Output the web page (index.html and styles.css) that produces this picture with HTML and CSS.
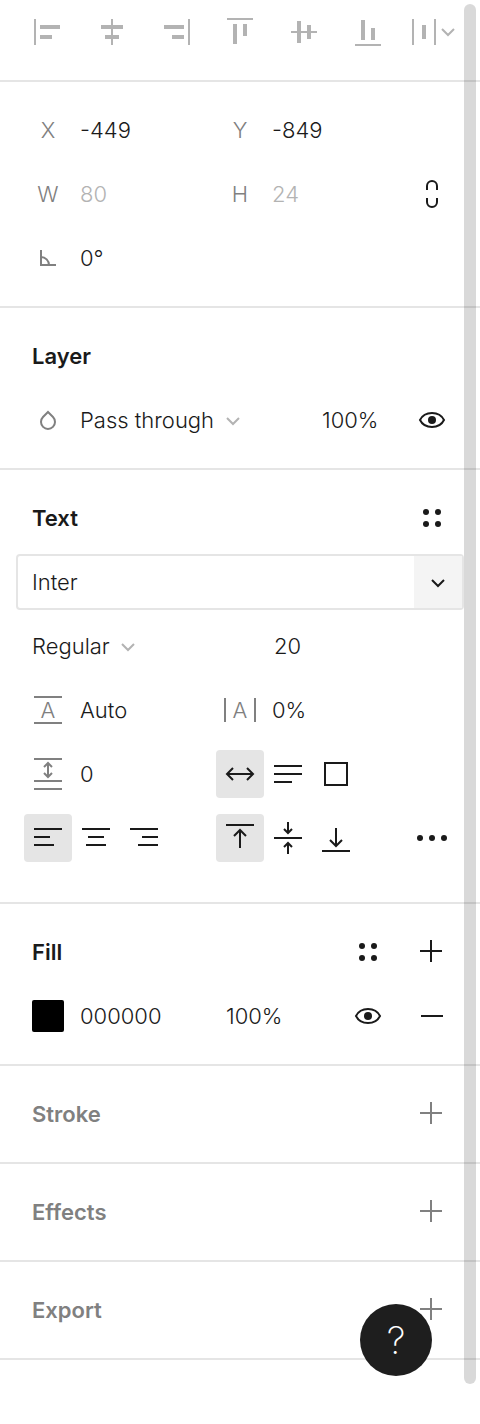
FILE: index.html
```html
<!DOCTYPE html>
<html lang="en">
<head>
    <meta charset="UTF-8">
    <meta name="viewport" content="width=device-width, initial-scale=1.0">
    <title>Design panel</title>
    <link rel="stylesheet" href="styles.css">
</head>
<body>
    <main class="panel">
        <!-- Alignment -->
        <section class="section align">
            <div class="row">
                <button class="icon-btn" aria-label="Align left">
                    <svg class="icon" viewBox="0 0 48 48"><path class="solid" d="M10 11h2v26h-2zM16 17h20v4H16zM16 27h12v4H16z"/></svg>
                </button>
                <button class="icon-btn" aria-label="Align horizontal centers">
                    <svg class="icon" viewBox="0 0 48 48"><path class="solid" d="M23 11h2v26h-2zM13 17h22v4H13zM17 27h14v4H17z"/></svg>
                </button>
                <button class="icon-btn" aria-label="Align right">
                    <svg class="icon" viewBox="0 0 48 48"><path class="solid" d="M36 11h2v26h-2zM12 17h20v4H12zM20 27h12v4H20z"/></svg>
                </button>
                <button class="icon-btn" aria-label="Align top">
                    <svg class="icon" viewBox="0 0 48 48"><path class="solid" d="M11 10h26v2H11zM17 16h4v20h-4zM27 16h4v12h-4z"/></svg>
                </button>
                <button class="icon-btn" aria-label="Align vertical centers">
                    <svg class="icon" viewBox="0 0 48 48"><path class="solid" d="M11 23h26v2H11zM17 13h4v22h-4zM27 17h4v14h-4z"/></svg>
                </button>
                <button class="icon-btn" aria-label="Align bottom">
                    <svg class="icon" viewBox="0 0 48 48"><path class="solid" d="M11 36h26v2H11zM17 12h4v20h-4zM27 20h4v12h-4z"/></svg>
                </button>
                <button class="icon-btn" aria-label="Distribute">
                    <svg class="icon" viewBox="0 0 48 48"><path class="solid" d="M4 11h2v26H4zM14 17h4v14h-4zM26 11h2v26h-2z"/><path d="M34 21l6 6 6-6"/></svg>
                </button>
            </div>
        </section>

        <!-- Position and size -->
        <section class="section">
            <div class="row">
                <label class="field"><span class="field-icon">X</span><input type="text" value="-449"></label>
                <label class="field"><span class="field-icon">Y</span><input type="text" value="-849"></label>
            </div>
            <div class="row">
                <label class="field"><span class="field-icon">W</span><input type="text" value="80" disabled></label>
                <label class="field"><span class="field-icon">H</span><input type="text" value="24" disabled></label>
                <button class="icon-btn" aria-label="Constrain proportions">
                    <svg class="icon" viewBox="0 0 48 48"><path d="M19 20v-4a5 5 0 0 1 10 0v4M19 28v4a5 5 0 0 0 10 0v-4"/></svg>
                </button>
            </div>
            <div class="row">
                <label class="field">
                    <span class="field-icon"><svg class="icon" viewBox="0 0 48 48"><path d="M17 16v15h15M17 23a8 8 0 0 1 8 8"/></svg></span>
                    <input type="text" value="0°" aria-label="Rotation">
                </label>
            </div>
        </section>

        <!-- Layer -->
        <section class="section">
            <div class="row">
                <h2>Layer</h2>
            </div>
            <div class="row">
                <label class="field blend">
                    <span class="field-icon"><svg class="icon" viewBox="0 0 48 48"><path d="M24 16l5 5a7 7 0 1 1-10 0z"/></svg></span>
                    <select aria-label="Blend mode"><option>Pass through</option></select>
                    <svg class="chevron" viewBox="0 0 16 16"><path d="M2 6l6 6 6-6"/></svg>
                </label>
                <input class="layer-opacity" type="text" value="100%" aria-label="Layer opacity">
                <button class="icon-btn" aria-label="Toggle visibility">
                    <svg class="icon" viewBox="0 0 48 48"><path d="M12 24c2-4 6-7 12-7s10 3 12 7c-2 4-6 7-12 7s-10-3-12-7z"/><circle class="solid" cx="24" cy="24" r="4"/></svg>
                </button>
            </div>
        </section>

        <!-- Text -->
        <section class="section text">
            <div class="row">
                <h2>Text</h2>
                <button class="icon-btn last" aria-label="Text styles">
                    <svg class="icon" viewBox="0 0 48 48"><g class="solid"><circle cx="18" cy="18" r="3"/><circle cx="30" cy="18" r="3"/><circle cx="18" cy="30" r="3"/><circle cx="30" cy="30" r="3"/></g></svg>
                </button>
            </div>
            <div class="row">
                <div class="font-box">
                    <input type="text" value="Inter" aria-label="Font family">
                    <button class="font-toggle" aria-label="Choose font">
                        <svg class="chevron" viewBox="0 0 16 16"><path d="M2 6l6 6 6-6"/></svg>
                    </button>
                </div>
            </div>
            <div class="row">
                <label class="field weight">
                    <select aria-label="Font weight"><option>Regular</option></select>
                    <svg class="chevron" viewBox="0 0 16 16"><path d="M2 6l6 6 6-6"/></svg>
                </label>
                <input class="font-size" type="text" value="20" aria-label="Font size">
            </div>
            <div class="row">
                <label class="field">
                    <span class="field-icon"><svg class="icon" viewBox="0 0 48 48"><path d="M10 11h28M10 37h28"/><text x="24" y="32">A</text></svg></span>
                    <input type="text" value="Auto" aria-label="Line height">
                </label>
                <label class="field">
                    <span class="field-icon"><svg class="icon" viewBox="0 0 48 48"><path d="M9 12v24M39 12v24"/><text x="24" y="32">A</text></svg></span>
                    <input type="text" value="0%" aria-label="Letter spacing">
                </label>
            </div>
            <div class="row">
                <label class="field">
                    <span class="field-icon"><svg class="icon" viewBox="0 0 48 48"><path d="M10 9h28M10 31h28M10 39h28M24 13v14M20 17l4-4 4 4M20 23l4 4 4-4"/></svg></span>
                    <input type="text" value="0" aria-label="Paragraph spacing">
                </label>
                <div class="toggles">
                    <button class="icon-btn active" aria-label="Auto width" aria-pressed="true">
                        <svg class="icon" viewBox="0 0 48 48"><path d="M11 24h26M17 18l-6 6 6 6M31 18l6 6-6 6"/></svg>
                    </button>
                    <button class="icon-btn" aria-label="Auto height">
                        <svg class="icon" viewBox="0 0 48 48"><path d="M10 16h28M10 24h28M10 32h18"/></svg>
                    </button>
                    <button class="icon-btn" aria-label="Fixed size">
                        <svg class="icon" viewBox="0 0 48 48"><path d="M13 13h22v22H13z"/></svg>
                    </button>
                </div>
            </div>
            <div class="row">
                <div class="toggles">
                    <button class="icon-btn active" aria-label="Text align left" aria-pressed="true">
                        <svg class="icon" viewBox="0 0 48 48"><path d="M10 15h28M10 23h16M10 31h20"/></svg>
                    </button>
                    <button class="icon-btn" aria-label="Text align center">
                        <svg class="icon" viewBox="0 0 48 48"><path d="M10 15h28M16 23h16M14 31h20"/></svg>
                    </button>
                    <button class="icon-btn" aria-label="Text align right">
                        <svg class="icon" viewBox="0 0 48 48"><path d="M10 15h28M22 23h16M18 31h20"/></svg>
                    </button>
                </div>
                <div class="toggles">
                    <button class="icon-btn active" aria-label="Align text top" aria-pressed="true">
                        <svg class="icon" viewBox="0 0 48 48"><path d="M10 11h28M24 34V16M18 22l6-6 6 6"/></svg>
                    </button>
                    <button class="icon-btn" aria-label="Align text middle">
                        <svg class="icon" viewBox="0 0 48 48"><path d="M10 24h28M24 8v11M20 15l4 4 4-4M24 40V29M20 33l4-4 4 4"/></svg>
                    </button>
                    <button class="icon-btn" aria-label="Align text bottom">
                        <svg class="icon" viewBox="0 0 48 48"><path d="M10 37h28M24 14v18M18 26l6 6 6-6"/></svg>
                    </button>
                </div>
                <button class="icon-btn" aria-label="More text options">
                    <svg class="icon" viewBox="0 0 48 48"><g class="solid"><circle cx="12" cy="24" r="3"/><circle cx="24" cy="24" r="3"/><circle cx="36" cy="24" r="3"/></g></svg>
                </button>
            </div>
        </section>

        <!-- Fill -->
        <section class="section">
            <div class="row">
                <h2>Fill</h2>
                <button class="icon-btn" aria-label="Fill styles">
                    <svg class="icon" viewBox="0 0 48 48"><g class="solid"><circle cx="18" cy="18" r="3"/><circle cx="30" cy="18" r="3"/><circle cx="18" cy="30" r="3"/><circle cx="30" cy="30" r="3"/></g></svg>
                </button>
                <button class="icon-btn" aria-label="Add fill">
                    <svg class="icon" viewBox="0 0 48 48"><path d="M12 23h22M23 12v22"/></svg>
                </button>
            </div>
            <div class="row">
                <button class="swatch" aria-label="Fill color"></button>
                <input class="hex" type="text" value="000000" aria-label="Hex color">
                <input class="fill-opacity" type="text" value="100%" aria-label="Fill opacity">
                <button class="icon-btn" aria-label="Toggle fill">
                    <svg class="icon" viewBox="0 0 48 48"><path d="M12 24c2-4 6-7 12-7s10 3 12 7c-2 4-6 7-12 7s-10-3-12-7z"/><circle class="solid" cx="24" cy="24" r="4"/></svg>
                </button>
                <button class="icon-btn" aria-label="Remove fill">
                    <svg class="icon" viewBox="0 0 48 48"><path d="M13 24h22"/></svg>
                </button>
            </div>
        </section>

        <!-- Empty sections -->
        <section class="section empty">
            <div class="row">
                <h2>Stroke</h2>
                <button class="icon-btn last" aria-label="Add stroke">
                    <svg class="icon" viewBox="0 0 48 48"><path d="M12 23h22M23 12v22"/></svg>
                </button>
            </div>
        </section>
        <section class="section empty">
            <div class="row">
                <h2>Effects</h2>
                <button class="icon-btn last" aria-label="Add effect">
                    <svg class="icon" viewBox="0 0 48 48"><path d="M12 23h22M23 12v22"/></svg>
                </button>
            </div>
        </section>
        <section class="section empty">
            <div class="row">
                <h2>Export</h2>
                <button class="icon-btn last" aria-label="Add export">
                    <svg class="icon" viewBox="0 0 48 48"><path d="M12 23h22M23 12v22"/></svg>
                </button>
            </div>
        </section>

        <button class="help" aria-label="Help">?</button>
        <div class="scrollbar"></div>
    </main>
</body>
</html>
```
FILE: styles.css
```css
* {
    margin: 0;
    padding: 0;
    box-sizing: border-box;
}

body {
    font-family: 'Inter', sans-serif;
    font-size: 22px;
    font-weight: 300;
    line-height: 32px;
    color: #1a1a1a;
    background-color: #fff;
}

button,
input,
select {
    font: inherit;
    color: inherit;
    background: none;
    border: none;
    border-radius: 0;
    outline: none;
}

button {
    cursor: pointer;
}

input {
    width: 100%;
    min-width: 0;
}

input:disabled {
    color: #b3b3b3;
}

select {
    appearance: none;
}

h2 {
    grid-column: span 5;
    padding-left: 16px;
    font-size: 22px;
    font-weight: 600;
}

.panel {
    position: relative;
    min-height: 100vh;
}

.section {
    padding: 16px;
    border-bottom: 2px solid #e5e5e5;
}

.section.align {
    padding-top: 0;
    color: #b3b3b3;
}

.section.text {
    padding-bottom: 32px;
}

.section.empty {
    color: #808080;
}

.row {
    display: grid;
    grid-template-columns: repeat(7, 1fr);
    align-items: center;
    height: 64px;
}

/* Icons */
.icon {
    display: block;
    width: 48px;
    height: 48px;
    fill: none;
    stroke: currentColor;
    stroke-width: 2;
}

.icon .solid,
.icon text {
    fill: currentColor;
    stroke: none;
}

.icon text {
    font-size: 22px;
    text-anchor: middle;
}

.chevron {
    flex: none;
    width: 16px;
    height: 16px;
    fill: none;
    stroke: #b3b3b3;
    stroke-width: 2;
}

.icon-btn {
    justify-self: center;
    width: 48px;
    height: 48px;
    border-radius: 4px;
}

.icon-btn.active {
    background-color: #e5e5e5;
}

.icon-btn.last {
    grid-column: 7;
}

/* Fields */
.field {
    grid-column: span 3;
    display: flex;
    align-items: center;
}

.field-icon {
    flex: 0 0 64px;
    display: flex;
    justify-content: center;
    color: #808080;
}

.field .chevron {
    margin-left: 10px;
}

.field.blend {
    grid-column: span 4;
}

.field.weight {
    grid-column: span 4;
    padding-left: 16px;
}

.layer-opacity {
    grid-column: span 2;
    padding-left: 50px;
}

.font-size {
    grid-column: span 2;
    padding-left: 2px;
}

.hex {
    grid-column: span 2;
}

.fill-opacity {
    grid-column: span 2;
    padding-left: 18px;
}

.toggles {
    grid-column: span 3;
    display: flex;
    padding-left: 8px;
}

.font-box {
    grid-column: span 7;
    display: flex;
    height: 56px;
    border: 2px solid #e5e5e5;
    border-radius: 4px;
}

.font-box input {
    padding-left: 14px;
}

.font-toggle {
    flex: 0 0 48px;
    display: flex;
    align-items: center;
    justify-content: center;
    background-color: #f4f4f4;
}

.font-toggle .chevron {
    stroke: #1a1a1a;
}

.swatch {
    justify-self: center;
    width: 32px;
    height: 32px;
    background-color: #000;
    border-radius: 2px;
}

/* Floating parts */
.help {
    position: absolute;
    right: 48px;
    bottom: 48px;
    width: 72px;
    height: 72px;
    font-size: 38px;
    font-weight: 200;
    color: #fff;
    background-color: #1e1e1e;
    border-radius: 50%;
}

.scrollbar {
    position: absolute;
    top: 4px;
    right: 4px;
    bottom: 40px;
    width: 12px;
    background-color: rgba(0, 0, 0, 0.15);
    border-radius: 6px;
}
```
